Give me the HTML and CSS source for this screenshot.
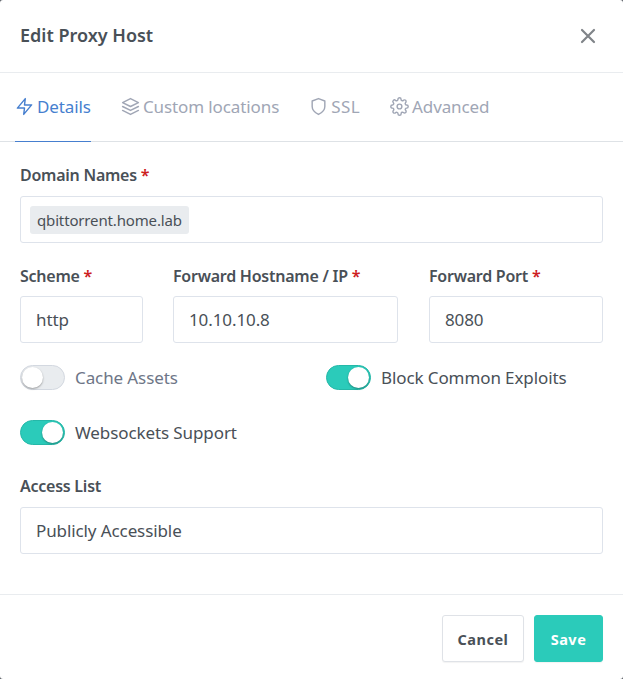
FILE: index.html
```html
<!DOCTYPE html>
<html lang="en">
<head>
<meta charset="utf-8">
<title>Edit Proxy Host</title>
<link rel="stylesheet" href="styles.css">
</head>
<body>
<div class="modal">
  <header class="modal-header">
    <h1 class="modal-title">Edit Proxy Host</h1>
    <svg class="close" viewBox="0 0 22 22" fill="none" stroke="currentColor" stroke-width="2.2" stroke-linecap="round"><path d="M5 5l12 12M17 5L5 17"/></svg>
  </header>
  <nav class="tabs">
    <a class="tab active">
      <svg class="ico" viewBox="0 0 24 24"><path d="M13 2L3 14h9l-1 8 10-12h-9l1-8z"/></svg>
      <span class="tab-text">Details</span>
    </a>
    <a class="tab">
      <svg class="ico" viewBox="0 0 24 24"><path d="M12 2L2 7l10 5 10-5-10-5z"/><path d="M2 17l10 5 10-5"/><path d="M2 12l10 5 10-5"/></svg>
      <span class="tab-text">Custom locations</span>
    </a>
    <a class="tab tab-ssl">
      <svg class="ico" viewBox="0 0 24 24"><path d="M12 22s8-4 8-10V5l-8-3-8 3v7c0 6 8 10 8 10z"/></svg>
      <span class="tab-text">SSL</span>
    </a>
    <a class="tab">
      <svg class="ico" viewBox="0 0 24 24"><circle cx="12" cy="12" r="3"/><path d="M19.4 15a1.65 1.65 0 0 0 .33 1.82l.06.06a2 2 0 1 1-2.83 2.83l-.06-.06a1.65 1.65 0 0 0-2.82 1.17V21a2 2 0 1 1-4 0v-.09A1.65 1.65 0 0 0 9 19.4a1.65 1.65 0 0 0-1.82.33l-.06.06a2 2 0 1 1-2.83-2.83l.06-.06a1.65 1.65 0 0 0-1.17-2.82H3a2 2 0 1 1 0-4h.09A1.65 1.65 0 0 0 4.6 9a1.65 1.65 0 0 0-.33-1.82l-.06-.06a2 2 0 1 1 2.83-2.83l.06.06A1.65 1.65 0 0 0 9 4.6h.09A1.65 1.65 0 0 0 10 3.09V3a2 2 0 1 1 4 0v.09a1.65 1.65 0 0 0 1 1.51 1.65 1.65 0 0 0 1.82-.33l.06-.06a2 2 0 1 1 2.83 2.83l-.06.06A1.65 1.65 0 0 0 19.4 9v.09a1.65 1.65 0 0 0 1.51 1H21a2 2 0 1 1 0 4h-.09a1.65 1.65 0 0 0-1.51 1z"/></svg>
      <span class="tab-text">Advanced</span>
    </a>
  </nav>
  <main class="modal-body">
    <div class="field">
      <label class="label">Domain Names <span class="req">*</span></label>
      <div class="control control-tags"><span class="tag">qbittorrent.home.lab</span></div>
    </div>
    <div class="row-fields">
      <div class="field col-scheme">
        <label class="label">Scheme <span class="req">*</span></label>
        <div class="control">http</div>
      </div>
      <div class="field col-host">
        <label class="label">Forward Hostname / IP <span class="req">*</span></label>
        <div class="control">10.10.10.8</div>
      </div>
      <div class="field col-port">
        <label class="label">Forward Port <span class="req">*</span></label>
        <div class="control">8080</div>
      </div>
    </div>
    <div class="toggles">
      <div class="toggle"><span class="switch"></span><span class="toggle-text muted">Cache Assets</span></div>
      <div class="toggle"><span class="switch on"></span><span class="toggle-text">Block Common Exploits</span></div>
      <div class="toggle"><span class="switch on"></span><span class="toggle-text">Websockets Support</span></div>
    </div>
    <div class="field">
      <label class="label">Access List</label>
      <div class="control">Publicly Accessible</div>
    </div>
  </main>
  <footer class="modal-footer">
    <button class="btn">Cancel</button>
    <button class="btn btn-save">Save</button>
  </footer>
</div>
</body>
</html>
```

FILE: styles.css
```css
* { box-sizing: border-box; }
html, body { margin: 0; height: 100%; }
body {
  background: #5a5f66;
  font-family: "Noto Sans", "Open Sans", sans-serif;
  color: #495057;
  overflow: hidden;
}
.modal {
  width: 623px;
  height: 679px;
  background: #fff;
  border-radius: 3px;
  display: flex;
  flex-direction: column;
}
.modal-header {
  height: 73px;
  border-bottom: 1px solid #e9ecef;
  padding: 0 24px 1px 20px;
  display: flex;
  align-items: center;
  justify-content: space-between;
}
.modal-title {
  margin: 0 0 2px;
  font-size: 18px;
  font-weight: 600;
  color: #495057;
}
.close { color: #808489; width: 22px; height: 22px; }
.tabs {
  height: 69px;
  border-bottom: 1px solid #dee2e6;
  padding-left: 15px;
  display: flex;
  gap: 30px;
}
.tab {
  display: flex;
  align-items: center;
  gap: 3px;
  height: 69px;
  padding-bottom: 1px;
  font-size: 17px;
  letter-spacing: -0.1px;
  color: #a0a6b5;
  border-bottom: 1px solid transparent;
}
.tab.active { color: #467fcf; border-bottom-color: #467fcf; }
.tab-ssl .tab-text { letter-spacing: 0.4px; }
.ico {
  width: 19px;
  height: 19px;
  fill: none;
  stroke: currentColor;
  stroke-width: 1.8;
  stroke-linecap: round;
  stroke-linejoin: round;
}
.modal-body { flex: 1; padding: 22px 20px 0; }
.label {
  display: block;
  font-size: 16px;
  font-weight: 600;
  line-height: 22px;
  letter-spacing: -0.25px;
  color: #495057;
  margin-bottom: 10px;
}
.req { color: #cd201f; }
.control {
  height: 47px;
  border: 1px solid #dee3eb;
  border-radius: 3px;
  padding: 0 15px;
  display: flex;
  align-items: center;
  font-size: 17px;
  letter-spacing: -0.1px;
  color: #495057;
}
.control-tags { padding: 0 9px; }
.tag {
  background: #e9ecef;
  border-radius: 3px;
  height: 28px;
  padding: 0 7px;
  display: flex;
  align-items: center;
  font-size: 15px;
  letter-spacing: -0.15px;
}
.row-fields {
  display: grid;
  grid-template-columns: 123px 225px 175px;
  gap: 30px;
  margin-top: 22px;
}
.row-fields .label { margin-bottom: 9px; }
.col-port { margin-left: 1px; }
.toggles {
  display: grid;
  grid-template-columns: 306px 1fr;
  row-gap: 30px;
  margin-top: 22px;
}
.toggle { display: flex; align-items: center; gap: 10px; height: 25px; }
.toggle-text { font-size: 17px; letter-spacing: -0.1px; color: #495057; }
.toggle-text.muted { color: #6e7687; }
.switch {
  width: 45px;
  height: 25px;
  border-radius: 13px;
  background: #e9ecef;
  border: 1px solid #d3d8e0;
  position: relative;
  flex: none;
}
.switch::before {
  content: "";
  position: absolute;
  top: 1px;
  left: 1px;
  width: 21px;
  height: 21px;
  border-radius: 50%;
  background: #fff;
  box-shadow: 0 1px 2px rgba(0,0,0,.35);
}
.switch.on { background: #2bcbba; border-color: #25b8a8; }
.switch.on::before { left: 21px; }
.toggles + .field { margin-top: 30px; }
.modal-footer {
  height: 85px;
  border-top: 1px solid #e9ecef;
  padding: 20px 20px 0;
  display: flex;
  justify-content: flex-end;
  gap: 10px;
}
.btn {
  height: 47px;
  width: 82px;
  background: #fff;
  border: 1px solid #dfe2e7;
  border-radius: 3px;
  box-shadow: 0 1px 1px rgba(0,0,0,.05);
  font-family: inherit;
  font-size: 14.5px;
  font-weight: 700;
  letter-spacing: 0.5px;
  color: #495057;
}
.btn-save {
  width: 69px;
  background: #2bcbba;
  border-color: #2bcbba;
  color: #fff;
}
```
